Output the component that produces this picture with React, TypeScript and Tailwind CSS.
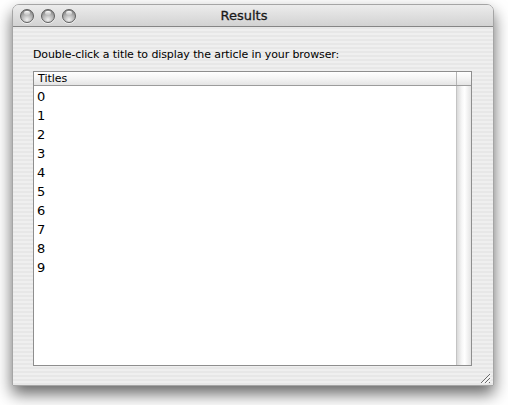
const font = "font-['DejaVu_Sans','Liberation_Sans',sans-serif]";

function TrafficLight() {
  return (
    <span className="block w-[14px] h-[14px] rounded-full border border-[#5e5e5e] bg-[radial-gradient(circle_at_50%_80%,#f0f0f0_0%,#bdbdbd_40%,#6e6e6e_100%)] shadow-[0_1px_0_rgba(255,255,255,0.6)] relative">
      <span className="absolute left-[3px] top-[1px] w-[6px] h-[4px] rounded-full bg-[linear-gradient(to_bottom,#ffffff,rgba(255,255,255,0.2))]" />
    </span>
  );
}

function ResizeGrip() {
  return (
    <svg width="12" height="12" viewBox="0 0 12 12">
      <path d="M11 2 L2 11 M11 6 L6 11 M11 10 L10 11" stroke="#6a6a6a" strokeWidth="1" />
      <path d="M11.8 2.8 L2.8 11.8 M11.8 6.8 L6.8 11.8" stroke="#ffffff" strokeWidth="1" />
    </svg>
  );
}

export default function App() {
  const titles = ["0", "1", "2", "3", "4", "5", "6", "7", "8", "9"];

  return (
    <div className={`w-[508px] h-[405px] bg-white pl-[12px] pt-[4px] ${font}`}>
      <div className="w-[482px] h-[382px] flex flex-col rounded-t-[7px] overflow-hidden shadow-[0_8px_16px_rgba(0,0,0,0.6)] border border-[#a5a5a5] bg-[repeating-linear-gradient(to_bottom,#efefef_0px,#efefef_2px,#e7e7e7_2px,#e7e7e7_4px)]">
        {/* title bar */}
        <div className="h-[22px] shrink-0 flex items-center px-[7px] border-b border-[#858585] bg-[linear-gradient(to_bottom,#ececec,#d2d2d2)] relative">
          <div className="flex gap-[7px]">
            <TrafficLight />
            <TrafficLight />
            <TrafficLight />
          </div>
          <div className="absolute inset-0 flex items-center justify-center pr-[18px] text-[13px] text-[#1a1a1a] [-webkit-text-stroke:0.3px_#1a1a1a]">
            Results
          </div>
        </div>

        {/* content */}
        <div className="flex-1 flex flex-col pl-[20px] pr-[21px] pt-[21px] pb-[19px] relative">
          <p className="text-[11px] leading-[14px] text-black tracking-[-0.1px] h-[14px]">
            Double-click a title to display the article in your browser:
          </p>
          <div className="mt-[9px] flex-1 flex flex-col border border-[#8e8e8e] bg-white">
            <div className="h-[14px] flex border-b border-[#9c9c9c] bg-[linear-gradient(to_bottom,#ffffff,#f4f4f4_50%,#e4e4e4)]">
              <div className="flex-1 pl-[4px] text-[11px] leading-[14px]">Titles</div>
              <div className="w-[15px] border-l border-[#b5b5b5]" />
            </div>
            <div className="flex-1 flex">
              <div className="flex-1 pt-[1px]">
                {titles.map((t) => (
                  <div key={t} className="h-[19px] pl-[3px] text-[13px] leading-[19px] text-black">
                    {t}
                  </div>
                ))}
              </div>
              <div className="w-[15px] border-l border-[#c4c4c4] bg-[linear-gradient(to_right,#d9d9d9,#f7f7f7_35%,#ffffff_55%,#e4e4e4)]" />
            </div>
          </div>
          <div className="absolute right-[2px] bottom-[1px]">
            <ResizeGrip />
          </div>
        </div>
      </div>
    </div>
  );
}
